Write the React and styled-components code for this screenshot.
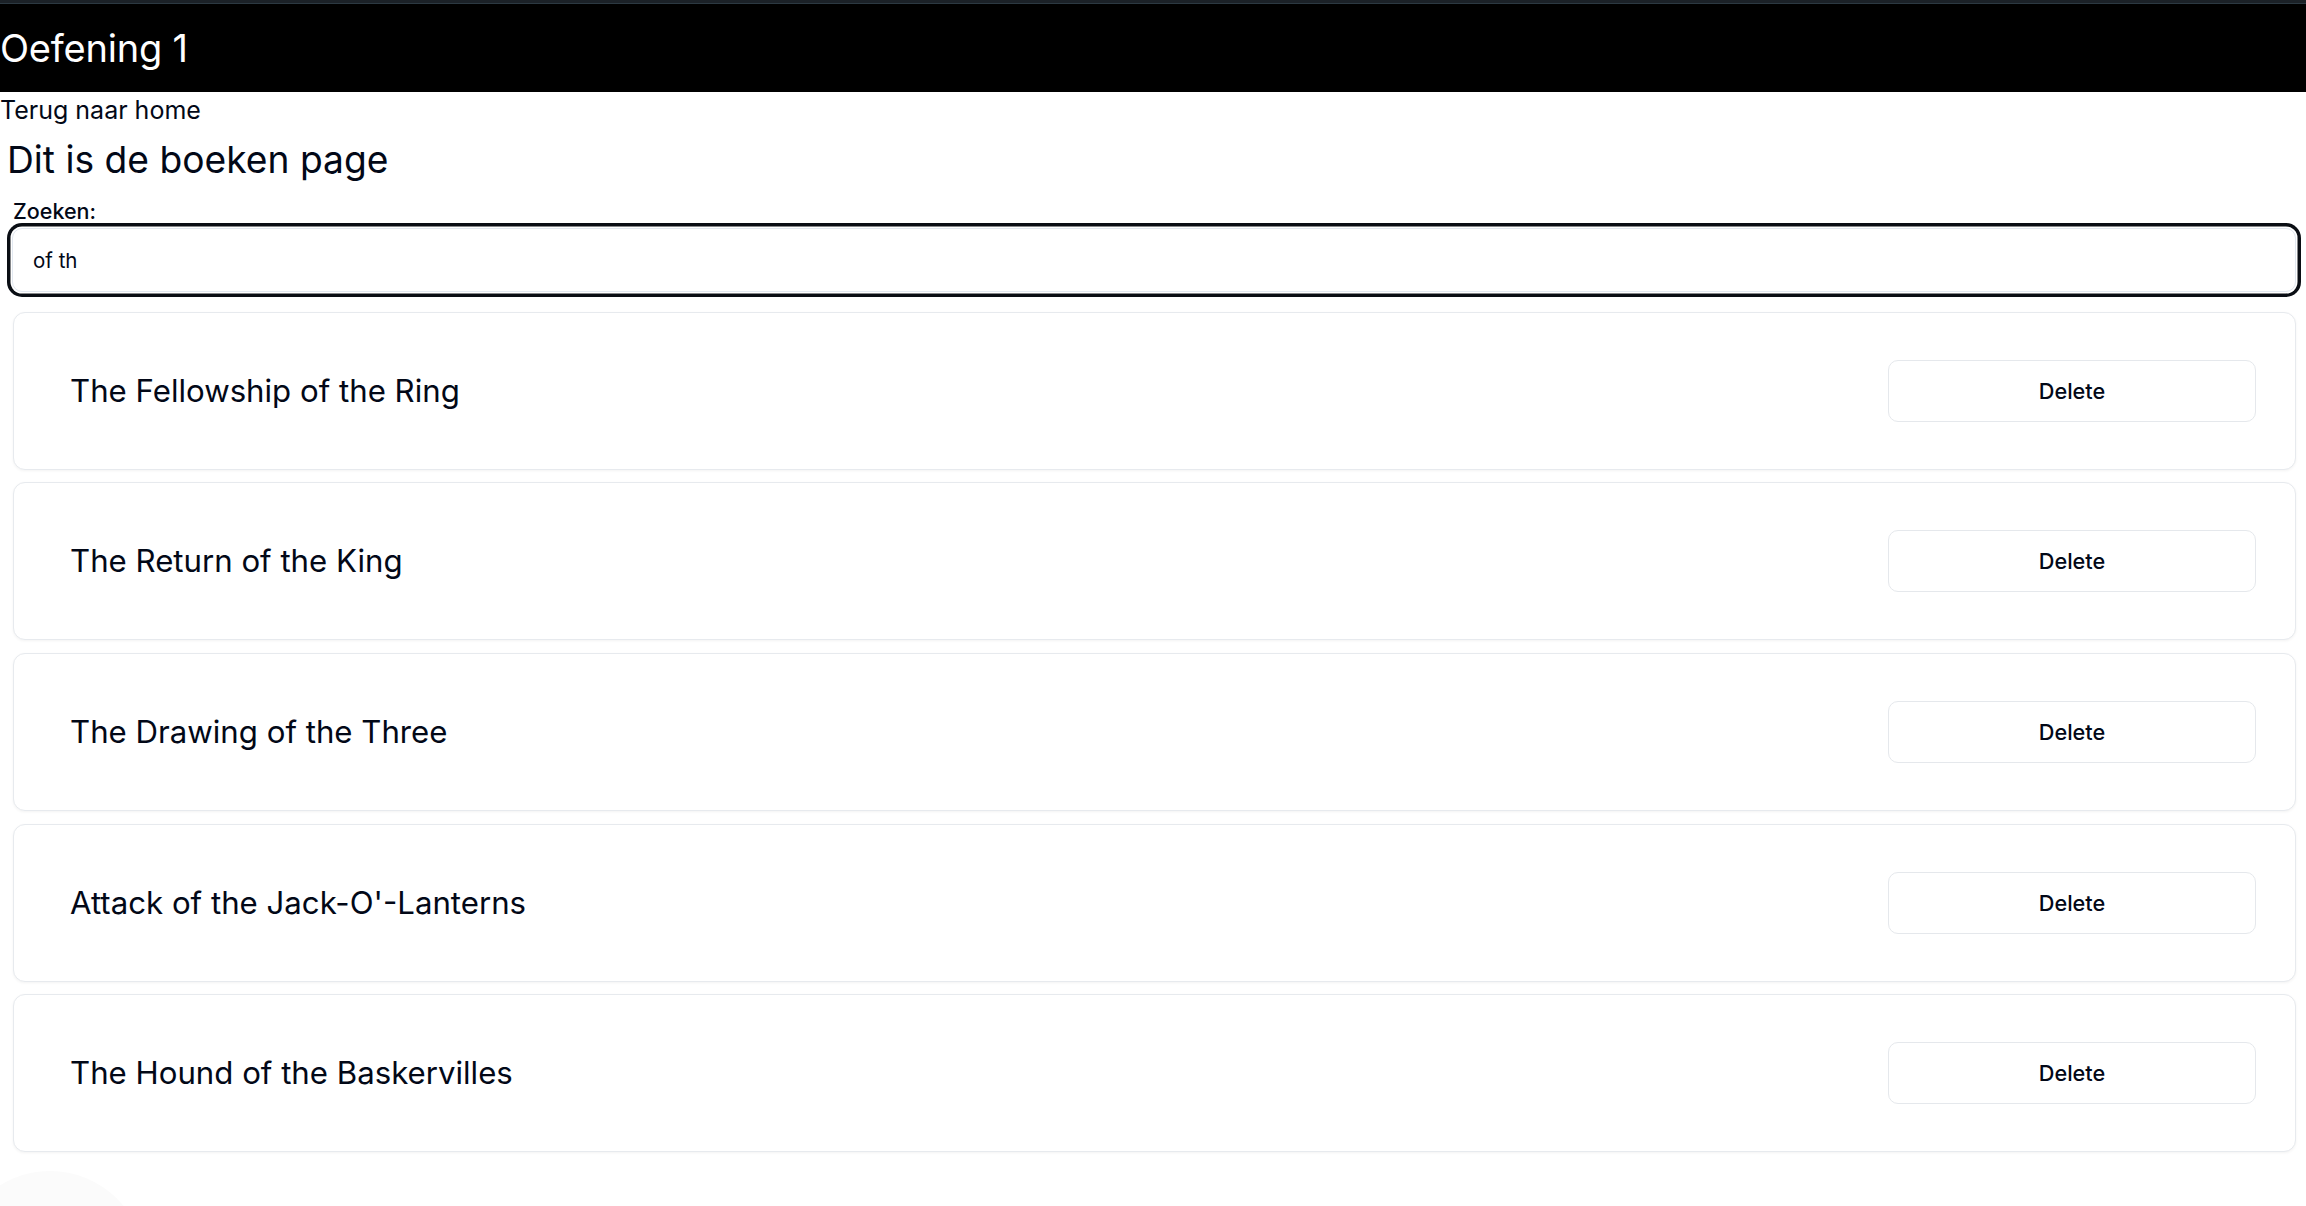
import React, { useState } from 'react';
import styled, { createGlobalStyle } from 'styled-components';

const GlobalStyle = createGlobalStyle`
  html, body {
    margin: 0;
    padding: 0;
    background: #ffffff;
    font-family: Inter, "Noto Sans", sans-serif;
    color: #020817;
  }
  * {
    box-sizing: border-box;
  }
`;

const TopStrip = styled.div`
  height: 4px;
  background: #1b2127;
  border-bottom: 1px solid #2c3942;
`;

const Header = styled.header`
  height: 88px;
  background: #000000;
  display: flex;
  align-items: center;
`;

const HeaderTitle = styled.h1`
  margin: 0;
  font-size: 38px;
  font-weight: 400;
  color: #ffffff;
  letter-spacing: -0.2px;
`;

const HomeLink = styled.a`
  display: block;
  margin-top: 3px;
  font-size: 25px;
  color: #020817;
  text-decoration: none;
`;

const Page = styled.main`
  padding: 0 10px 40px 12px;
  display: flex;
  flex-direction: column;
`;

const PageTitle = styled.h2`
  margin: 11.5px 0 0 -5px;
  font-size: 37.2px;
  font-weight: 400;
`;

const Label = styled.label`
  display: block;
  margin: 16px 0 4.5px 1px;
  font-size: 21.5px;
  font-weight: 500;
`;

const SearchInput = styled.input`
  width: 100%;
  height: 64px;
  padding: 0 20px;
  font-family: Inter, sans-serif;
  font-size: 20.5px;
  color: #020817;
  background: #ffffff;
  border: 1px solid #e2e8f0;
  border-radius: 10px;
  outline: none;
  box-shadow: 0 0 0 1.5px #ffffff, 0 0 0 5px #0a0e14;
`;

const List = styled.ul`
  list-style: none;
  margin: 19.5px 0 0;
  padding: 0;
  display: flex;
  flex-direction: column;
  gap: 12.7px;
`;

const Card = styled.li`
  height: 158px;
  margin-left: 1px;
  padding: 0 39px 0 56px;
  display: flex;
  align-items: center;
  justify-content: space-between;
  border: 1px solid #e7eaee;
  border-radius: 12px;
  background: #ffffff;
  box-shadow: 0 1px 3px rgba(0, 0, 0, 0.05);
`;

const BookTitle = styled.span`
  font-size: 31.2px;
  font-weight: 400;
`;

const DeleteButton = styled.button`
  width: 368px;
  height: 62px;
  font-family: Inter, sans-serif;
  font-size: 21.7px;
  font-weight: 500;
  color: #020817;
  background: #ffffff;
  border: 1px solid #e5e8ec;
  border-radius: 10px;
  cursor: pointer;
`;

const FadeBlob = styled.div`
  position: fixed;
  left: -45px;
  bottom: -155px;
  width: 190px;
  height: 190px;
  border-radius: 50%;
  background: #fbfbfb;
  pointer-events: none;
`;

const initialBooks = [
  'The Fellowship of the Ring',
  'The Return of the King',
  'The Drawing of the Three',
  "Attack of the Jack-O'-Lanterns",
  'The Hound of the Baskervilles',
];

export default function App() {
  const [query, setQuery] = useState('of th');
  const [books, setBooks] = useState(initialBooks);

  const shown = books.filter((b) => b.toLowerCase().includes(query.toLowerCase()));

  return (
    <>
      <GlobalStyle />
      <TopStrip />
      <Header>
        <HeaderTitle>Oefening 1</HeaderTitle>
      </Header>
      <HomeLink href="#">Terug naar home</HomeLink>
      <Page>
        <PageTitle>Dit is de boeken page</PageTitle>
        <Label htmlFor="zoeken">Zoeken:</Label>
        <SearchInput
          id="zoeken"
          value={query}
          onChange={(e) => setQuery(e.target.value)}
        />
        <List>
          {shown.map((title) => (
            <Card key={title}>
              <BookTitle>{title}</BookTitle>
              <DeleteButton onClick={() => setBooks(books.filter((b) => b !== title))}>
                Delete
              </DeleteButton>
            </Card>
          ))}
        </List>
      </Page>
      <FadeBlob />
    </>
  );
}
